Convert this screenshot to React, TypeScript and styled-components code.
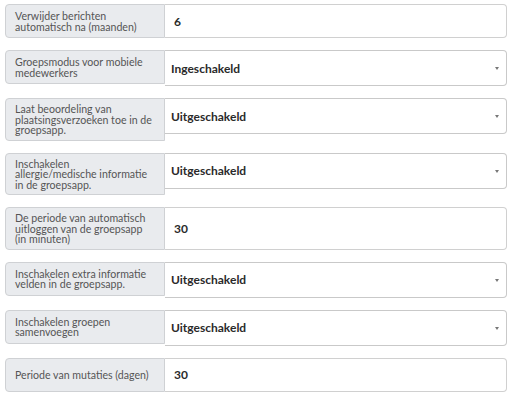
import React from 'react';
import styled, { createGlobalStyle } from 'styled-components';

const GlobalStyle = createGlobalStyle`
  body {
    margin: 0;
    background: #fff;
    font-family: Lato, "Open Sans", "Liberation Sans", sans-serif;
  }
`;

type Setting = {
  lines: string[];
  kind: 'text' | 'select';
  value: string;
};

const settings: Setting[] = [
  { lines: ['Verwijder berichten', 'automatisch na (maanden)'], kind: 'text', value: '6' },
  { lines: ['Groepsmodus voor mobiele', 'medewerkers'], kind: 'select', value: 'Ingeschakeld' },
  { lines: ['Laat beoordeling van', 'plaatsingsverzoeken toe in de', 'groepsapp.'], kind: 'select', value: 'Uitgeschakeld' },
  { lines: ['Inschakelen', 'allergie/medische informatie', 'in de groepsapp.'], kind: 'select', value: 'Uitgeschakeld' },
  { lines: ['De periode van automatisch', 'uitloggen van de groepsapp', '(in minuten)'], kind: 'text', value: '30' },
  { lines: ['Inschakelen extra informatie', 'velden in de groepsapp.'], kind: 'select', value: 'Uitgeschakeld' },
  { lines: ['Inschakelen groepen', 'samenvoegen'], kind: 'select', value: 'Uitgeschakeld' },
  { lines: ['Periode van mutaties (dagen)'], kind: 'text', value: '30' },
];

const Form = styled.div`
  padding: 4px 3px 0 5px;
`;

const Row = styled.div`
  display: flex;
  align-items: flex-start;
  margin-bottom: 12px;
`;

const Label = styled.label`
  box-sizing: border-box;
  width: 160px;
  flex: none;
  min-height: 34px;
  display: flex;
  flex-direction: column;
  justify-content: center;
  padding: 5px 3px 4px 9px;
  background: #e9ebee;
  border: 1px solid #cfd1d4;
  border-radius: 4px 0 0 4px;
  color: #555;
  font-size: 10.6px;
  line-height: 10.5px;
  white-space: nowrap;
`;

const TextInput = styled.input`
  box-sizing: border-box;
  flex: 1;
  align-self: stretch;
  min-width: 0;
  min-height: 34px;
  margin: 0;
  padding: 0 9px;
  border: 1px solid #d0d0d0;
  border-left: none;
  border-radius: 0 4px 4px 0;
  background: #fff;
  color: #2a2a2a;
  font-family: inherit;
  font-size: 12px;
  font-weight: 700;
  outline: none;
`;

const SelectWrap = styled.div`
  position: relative;
  flex: 1;
  display: flex;
`;

const Select = styled.select`
  box-sizing: border-box;
  flex: 1;
  height: 36px;
  margin: 0;
  padding: 0 20px 0 6px;
  appearance: none;
  border: 1px solid #c9c9c9;
  border-left: none;
  border-radius: 0 4px 4px 0;
  background: #fff;
  color: #2a2a2a;
  font-family: inherit;
  font-size: 12px;
  font-weight: 700;
  outline: none;
`;

const Caret = styled.span`
  position: absolute;
  right: 8px;
  top: 50%;
  margin-top: -1px;
  width: 0;
  height: 0;
  border-left: 2.5px solid transparent;
  border-right: 2.5px solid transparent;
  border-top: 3px solid #777;
  pointer-events: none;
`;

export default function App() {
  return (
    <>
      <GlobalStyle />
      <Form>
        {settings.map((s, i) => (
          <Row key={i}>
            <Label>
              {s.lines.map((line, j) => (
                <span key={j}>{line}</span>
              ))}
            </Label>
            {s.kind === 'text' ? (
              <TextInput type="text" defaultValue={s.value} />
            ) : (
              <SelectWrap>
                <Select defaultValue={s.value}>
                  <option>Ingeschakeld</option>
                  <option>Uitgeschakeld</option>
                </Select>
                <Caret />
              </SelectWrap>
            )}
          </Row>
        ))}
      </Form>
    </>
  );
}
